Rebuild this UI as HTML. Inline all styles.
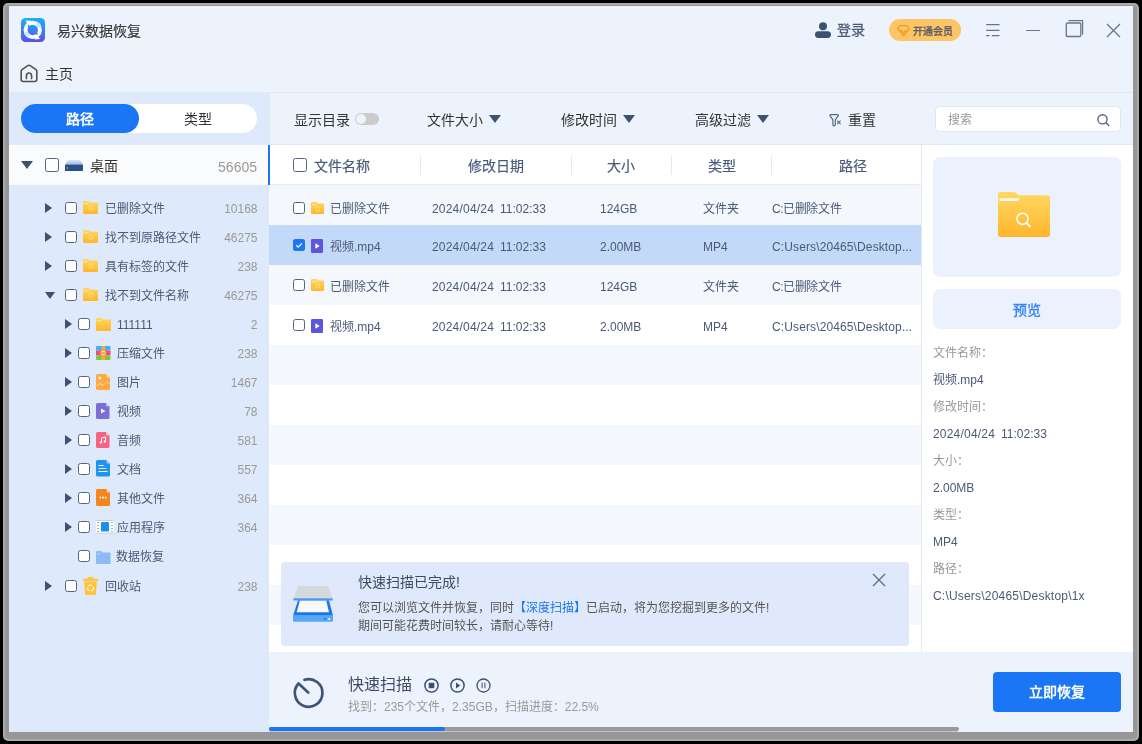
<!DOCTYPE html><html lang="zh-CN"><head><meta charset="utf-8"><style>
*{margin:0;padding:0;box-sizing:border-box}
html,body{width:1142px;height:744px;overflow:hidden;background:#000}
body{position:relative;font-family:"Liberation Sans",sans-serif;color:#333}
.a{position:absolute}
.t{position:absolute;white-space:nowrap;line-height:1;will-change:transform}
svg{position:absolute;overflow:visible}
</style></head><body>
<div class="a" style="left:3px;top:3px;width:1136px;height:738px;background:#aaaaaa;border-radius:5px"></div>
<div class="a" style="left:5px;top:5px;width:1132px;height:734px;background:#979797;border-radius:4px"></div>
<div class="a" style="left:9px;top:6px;width:1124px;height:726px;background:#edf3fd"></div>
<svg style="left:21px;top:18px" width="24" height="24" viewBox="0 0 24 24" ><defs><linearGradient id="lg" x1="0" y1="0" x2="0" y2="1"><stop offset="0" stop-color="#18b2f6"/><stop offset="0.55" stop-color="#3f7cec"/><stop offset="1" stop-color="#5b4ee6"/></linearGradient></defs>
<rect width="24" height="24" rx="4.5" fill="url(#lg)"/>
<circle cx="11.7" cy="11.9" r="7.2" fill="none" stroke="#fff" stroke-width="3.9"/>
<path d="M15.5 5.2A7.2 7.2 0 0 1 18.6 9.5" fill="none" stroke="#d0e4fb" stroke-width="3.9"/>
<path d="M8 18.1A7.2 7.2 0 0 1 4.8 14.2" fill="none" stroke="#d0e4fb" stroke-width="3.9"/>
<path d="M4.3 2.8L10 2.4L7.5 7Z" fill="#fff"/><path d="M19.1 21L13.4 21.4L15.9 16.8Z" fill="#fff"/><path d="M6.6 6.2L9.8 8.6L7.2 9.6Z" fill="#2f90f0"/><path d="M16.8 17.6L13.6 15.2L16.2 14.2Z" fill="#4a72ea"/></svg>
<div class="t" style="left:57.2px;top:24px;font-size:14px;color:#3a3a3a;-webkit-text-stroke:.2px #3a3a3a">易兴数据恢复</div>
<svg style="left:815px;top:22px" width="16" height="16" viewBox="0 0 16 16" ><circle cx="8" cy="4.2" r="4" fill="#3d5170"/><rect x="0" y="9.2" width="16" height="6.8" rx="3.4" fill="#3d5170"/></svg>
<div class="t" style="left:837px;top:23.2px;font-size:14px;color:#4d5a73;-webkit-text-stroke:.3px #4d5a73">登录</div>
<div class="a" style="left:889px;top:19px;width:72px;height:22px;border-radius:11px;background:#ffc465"></div>
<svg style="left:897px;top:25px" width="13" height="12" viewBox="0 0 13 12" ><path d="M3.2 0.7H9.8L12.4 3.6L6.5 10.6L0.6 3.6Z" fill="none" stroke="#f0961a" stroke-width="1.2" stroke-linejoin="round"/><path d="M3.7 5L6.5 7.8L9.3 5" fill="none" stroke="#f0961a" stroke-width="1.1"/></svg>
<div class="t" style="left:913px;top:27px;font-size:10px;color:#555a66;-webkit-text-stroke:.35px #555a66">开通会员</div>
<svg style="left:985px;top:22px" width="16" height="16" viewBox="0 0 16 16" ><path d="M1.2 2.7H14.5M1.2 8.3H14.5M1.2 13.6H4.6M6.8 13.6H14.5" fill="none" stroke="#66758e" stroke-width="1.3"/></svg>
<div class="a" style="left:1026px;top:30px;width:14px;height:1.3px;background:#66758e"></div>
<svg style="left:1065px;top:19px" width="20" height="19" viewBox="0 0 20 19" ><rect x="1.3" y="4" width="14.5" height="13.5" rx="1" fill="none" stroke="#66758e" stroke-width="1.3"/><path d="M3.5 1.6H17.6V15.5" fill="none" stroke="#66758e" stroke-width="1.2"/></svg>
<svg style="left:1106px;top:23px" width="15" height="15" viewBox="0 0 15 15" ><path d="M1 1L14 14M14 1L1 14" fill="none" stroke="#66758e" stroke-width="1.25"/></svg>
<svg style="left:20px;top:64px" width="18" height="19" viewBox="0 0 18 19" ><path d="M1.2 7.3Q1.2 6.3 2 5.7L7.8 1.6Q9 0.8 10.2 1.6L16 5.7Q16.8 6.3 16.8 7.3V15.5Q16.8 17.5 14.8 17.5H3.2Q1.2 17.5 1.2 15.5Z" fill="none" stroke="#505050" stroke-width="1.6" stroke-linejoin="round"/><path d="M6.4 14.6V11.8Q6.4 9 9 9Q11.6 9 11.6 11.8V14.6" fill="none" stroke="#505050" stroke-width="1.6" stroke-linecap="round"/></svg>
<div class="t" style="left:44.5px;top:67px;font-size:14px;color:#333;">主页</div>
<div class="a" style="left:9px;top:92px;width:260px;height:640px;background:#deeafb"></div>
<div class="a" style="left:21px;top:104px;width:236px;height:29px;border-radius:15px;background:#fff"></div>
<div class="a" style="left:21px;top:104px;width:118px;height:29px;border-radius:15px;background:#1b76f5"></div>
<div class="t" style="left:66px;top:112px;font-size:14px;color:#fff;font-weight:bold">路径</div>
<div class="t" style="left:184px;top:112px;font-size:14px;color:#333;">类型</div>
<div class="a" style="left:9px;top:145px;width:259px;height:40px;background:#fafbfd"></div>
<div class="a" style="left:268px;top:145px;width:2px;height:40px;background:#1b76f5;z-index:3"></div>
<svg style="left:21px;top:161.0px" width="12" height="8" viewBox="0 0 12 8" ><path d="M0 0H12L6.0 8Z" fill="#3d5170"/></svg>
<div class="a" style="left:45px;top:158.0px;width:14px;height:14px;border:1.5px solid #56657f;border-radius:2.5px;background:#fff"></div>
<svg style="left:65px;top:160px" width="18" height="11" viewBox="0 0 18 11" ><defs><linearGradient id="dg" x1="0" y1="0" x2="0" y2="1"><stop offset="0" stop-color="#d6e6fa"/><stop offset="1" stop-color="#9dbbe6"/></linearGradient></defs>
<path d="M3 0H15L18 4.5H0Z" fill="url(#dg)"/><rect x="0" y="4.5" width="18" height="6.5" rx="0.8" fill="#2a4f8c"/><rect x="1.8" y="7" width="1" height="2" fill="#5fd35f"/></svg>
<div class="t" style="left:89.5px;top:159px;font-size:14px;color:#333;">桌面</div>
<div class="t" style="left:0px;top:159.5px;font-size:14px;color:#999;width:257px;text-align:right">56605</div>
<svg style="left:45px;top:203px" width="7" height="10" viewBox="0 0 7 10" ><path d="M0 0L7 5L0 10Z" fill="#3d5170"/></svg>
<div class="a" style="left:65px;top:202.0px;width:12px;height:12px;border:1.5px solid #56657f;border-radius:2.5px;background:#fff"></div>
<svg style="left:83px;top:201px" width="15" height="13" viewBox="0 0 15 13" ><defs><linearGradient id="fg83_201" x1="0" y1="0" x2="0" y2="1"><stop offset="0" stop-color="#ffd760"/><stop offset="1" stop-color="#ffb62a"/></linearGradient></defs>
<path d="M1 0H5.5L7 1.5H14Q15 1.5 15 2.5V12Q15 13 14 13H1Q0 13 0 12V1Q0 0 1 0Z" fill="url(#fg83_201)"/>
<rect x="1" y="2.3" width="4.5" height="0.9" fill="#fff3c8" opacity="0.8"/><rect x="6.0" y="5" width="3.5" height="4" rx="1" fill="none" stroke="#ffe9a0" stroke-width="0.8" opacity="0.8"/></svg>
<div class="t" style="left:104.5px;top:203px;font-size:12px;color:#4b5976;">已删除文件</div>
<div class="t" style="left:0px;top:203px;font-size:12px;color:#999;width:257.5px;text-align:right">10168</div>
<svg style="left:45px;top:232px" width="7" height="10" viewBox="0 0 7 10" ><path d="M0 0L7 5L0 10Z" fill="#3d5170"/></svg>
<div class="a" style="left:65px;top:231.0px;width:12px;height:12px;border:1.5px solid #56657f;border-radius:2.5px;background:#fff"></div>
<svg style="left:83px;top:230px" width="15" height="13" viewBox="0 0 15 13" ><defs><linearGradient id="fg83_230" x1="0" y1="0" x2="0" y2="1"><stop offset="0" stop-color="#ffd760"/><stop offset="1" stop-color="#ffb62a"/></linearGradient></defs>
<path d="M1 0H5.5L7 1.5H14Q15 1.5 15 2.5V12Q15 13 14 13H1Q0 13 0 12V1Q0 0 1 0Z" fill="url(#fg83_230)"/>
<rect x="1" y="2.3" width="4.5" height="0.9" fill="#fff3c8" opacity="0.8"/><rect x="6.0" y="5" width="3.5" height="4" rx="1" fill="none" stroke="#ffe9a0" stroke-width="0.8" opacity="0.8"/></svg>
<div class="t" style="left:104.5px;top:232px;font-size:12px;color:#4b5976;">找不到原路径文件</div>
<div class="t" style="left:0px;top:232px;font-size:12px;color:#999;width:257.5px;text-align:right">46275</div>
<svg style="left:45px;top:261px" width="7" height="10" viewBox="0 0 7 10" ><path d="M0 0L7 5L0 10Z" fill="#3d5170"/></svg>
<div class="a" style="left:65px;top:260.0px;width:12px;height:12px;border:1.5px solid #56657f;border-radius:2.5px;background:#fff"></div>
<svg style="left:83px;top:259px" width="15" height="13" viewBox="0 0 15 13" ><defs><linearGradient id="fg83_259" x1="0" y1="0" x2="0" y2="1"><stop offset="0" stop-color="#ffd760"/><stop offset="1" stop-color="#ffb62a"/></linearGradient></defs>
<path d="M1 0H5.5L7 1.5H14Q15 1.5 15 2.5V12Q15 13 14 13H1Q0 13 0 12V1Q0 0 1 0Z" fill="url(#fg83_259)"/>
<rect x="1" y="2.3" width="4.5" height="0.9" fill="#fff3c8" opacity="0.8"/><rect x="6.0" y="5" width="3.5" height="4" rx="1" fill="none" stroke="#ffe9a0" stroke-width="0.8" opacity="0.8"/></svg>
<div class="t" style="left:104.5px;top:261px;font-size:12px;color:#4b5976;">具有标签的文件</div>
<div class="t" style="left:0px;top:261px;font-size:12px;color:#999;width:257.5px;text-align:right">238</div>
<svg style="left:45px;top:291.5px" width="10" height="7" viewBox="0 0 10 7" ><path d="M0 0H10L5.0 7Z" fill="#3d5170"/></svg>
<div class="a" style="left:65px;top:289.0px;width:12px;height:12px;border:1.5px solid #56657f;border-radius:2.5px;background:#fff"></div>
<svg style="left:83px;top:288px" width="15" height="13" viewBox="0 0 15 13" ><defs><linearGradient id="fg83_288" x1="0" y1="0" x2="0" y2="1"><stop offset="0" stop-color="#ffd760"/><stop offset="1" stop-color="#ffb62a"/></linearGradient></defs>
<path d="M1 0H5.5L7 1.5H14Q15 1.5 15 2.5V12Q15 13 14 13H1Q0 13 0 12V1Q0 0 1 0Z" fill="url(#fg83_288)"/>
<rect x="1" y="2.3" width="4.5" height="0.9" fill="#fff3c8" opacity="0.8"/><rect x="6.0" y="5" width="3.5" height="4" rx="1" fill="none" stroke="#ffe9a0" stroke-width="0.8" opacity="0.8"/></svg>
<div class="t" style="left:104.5px;top:290px;font-size:12px;color:#4b5976;">找不到文件名称</div>
<div class="t" style="left:0px;top:290px;font-size:12px;color:#999;width:257.5px;text-align:right">46275</div>
<svg style="left:65px;top:319px" width="7" height="10" viewBox="0 0 7 10" ><path d="M0 0L7 5L0 10Z" fill="#3d5170"/></svg>
<div class="a" style="left:78px;top:318.0px;width:12px;height:12px;border:1.5px solid #56657f;border-radius:2.5px;background:#fff"></div>
<svg style="left:96px;top:318px" width="15" height="13" viewBox="0 0 15 13" ><defs><linearGradient id="fg96_318" x1="0" y1="0" x2="0" y2="1"><stop offset="0" stop-color="#ffd760"/><stop offset="1" stop-color="#ffb62a"/></linearGradient></defs>
<path d="M1 0H5.5L7 1.5H14Q15 1.5 15 2.5V12Q15 13 14 13H1Q0 13 0 12V1Q0 0 1 0Z" fill="url(#fg96_318)"/>
<rect x="1" y="2.3" width="4.5" height="0.9" fill="#fff3c8" opacity="0.8"/></svg>
<div class="t" style="left:117.0px;top:319px;font-size:12px;color:#4b5976;">111111</div>
<div class="t" style="left:0px;top:319px;font-size:12px;color:#999;width:257.5px;text-align:right">2</div>
<svg style="left:65px;top:348px" width="7" height="10" viewBox="0 0 7 10" ><path d="M0 0L7 5L0 10Z" fill="#3d5170"/></svg>
<div class="a" style="left:78px;top:347.0px;width:12px;height:12px;border:1.5px solid #56657f;border-radius:2.5px;background:#fff"></div>
<svg style="left:96px;top:346px" width="14.5" height="14" viewBox="0 0 14.5 14" ><rect x="0" y="0" width="14.5" height="4.5" rx="1" fill="#3cb6f0"/><rect x="0" y="4.5" width="14.5" height="5" fill="#f0506a"/><rect x="0" y="9.5" width="14.5" height="4.5" rx="1" fill="#7cc742"/><rect x="5.5" y="0" width="3.5" height="14" fill="#ffa733"/><rect x="4.8" y="5.5" width="4.9" height="3" rx="1.2" fill="none" stroke="#ffe1b0" stroke-width="0.9"/></svg>
<div class="t" style="left:117.0px;top:348px;font-size:12px;color:#4b5976;">压缩文件</div>
<div class="t" style="left:0px;top:348px;font-size:12px;color:#999;width:257.5px;text-align:right">238</div>
<svg style="left:65px;top:377px" width="7" height="10" viewBox="0 0 7 10" ><path d="M0 0L7 5L0 10Z" fill="#3d5170"/></svg>
<div class="a" style="left:78px;top:376.0px;width:12px;height:12px;border:1.5px solid #56657f;border-radius:2.5px;background:#fff"></div>
<svg style="left:96px;top:374px" width="14" height="16" viewBox="0 0 14 16" ><path d="M1.5 0H10.5L14 3.5V14.5Q14 16 12.5 16H1.5Q0 16 0 14.5V1.5Q0 0 1.5 0Z" fill="#ffa940"/><path d="M10.5 0V2.5Q10.5 3.5 11.5 3.5H14Z" fill="#fff" opacity="0.55"/><circle cx="3.7" cy="4" r="1.6" fill="#fff" opacity="0.85"/><path d="M0.8 12L4 9.5L7 11.5L11 7.5L13.5 10" fill="none" stroke="#ffe2b8" stroke-width="0.9"/></svg>
<div class="t" style="left:117.0px;top:377px;font-size:12px;color:#4b5976;">图片</div>
<div class="t" style="left:0px;top:377px;font-size:12px;color:#999;width:257.5px;text-align:right">1467</div>
<svg style="left:65px;top:406px" width="7" height="10" viewBox="0 0 7 10" ><path d="M0 0L7 5L0 10Z" fill="#3d5170"/></svg>
<div class="a" style="left:78px;top:405.0px;width:12px;height:12px;border:1.5px solid #56657f;border-radius:2.5px;background:#fff"></div>
<svg style="left:96px;top:403px" width="13.5" height="16" viewBox="0 0 13.5 16" ><path d="M1.5 0H10.0L13.5 3.5V14.5Q13.5 16 12.0 16H1.5Q0 16 0 14.5V1.5Q0 0 1.5 0Z" fill="#7b6fd6"/><path d="M10.0 0V2.5Q10.0 3.5 11.0 3.5H13.5Z" fill="#fff" opacity="0.55"/><path d="M5 5.5L9.5 8L5 10.5Z" fill="#fff" opacity="0.9"/></svg>
<div class="t" style="left:117.0px;top:406px;font-size:12px;color:#4b5976;">视频</div>
<div class="t" style="left:0px;top:406px;font-size:12px;color:#999;width:257.5px;text-align:right">78</div>
<svg style="left:65px;top:435px" width="7" height="10" viewBox="0 0 7 10" ><path d="M0 0L7 5L0 10Z" fill="#3d5170"/></svg>
<div class="a" style="left:78px;top:434.0px;width:12px;height:12px;border:1.5px solid #56657f;border-radius:2.5px;background:#fff"></div>
<svg style="left:96px;top:432px" width="13.5" height="16" viewBox="0 0 13.5 16" ><path d="M1.5 0H10.0L13.5 3.5V14.5Q13.5 16 12.0 16H1.5Q0 16 0 14.5V1.5Q0 0 1.5 0Z" fill="#f56580"/><path d="M10.0 0V2.5Q10.0 3.5 11.0 3.5H13.5Z" fill="#fff" opacity="0.55"/><path d="M5.5 10.5V6L9.5 5V9.5" fill="none" stroke="#fff" stroke-width="1"/><circle cx="4.7" cy="10.6" r="1.1" fill="#fff"/><circle cx="8.7" cy="9.7" r="1.1" fill="#fff"/></svg>
<div class="t" style="left:117.0px;top:435px;font-size:12px;color:#4b5976;">音频</div>
<div class="t" style="left:0px;top:435px;font-size:12px;color:#999;width:257.5px;text-align:right">581</div>
<svg style="left:65px;top:464px" width="7" height="10" viewBox="0 0 7 10" ><path d="M0 0L7 5L0 10Z" fill="#3d5170"/></svg>
<div class="a" style="left:78px;top:463.0px;width:12px;height:12px;border:1.5px solid #56657f;border-radius:2.5px;background:#fff"></div>
<svg style="left:96px;top:460px" width="14" height="16.5" viewBox="0 0 14 16.5" ><path d="M1.5 0H10.5L14 3.5V15.0Q14 16.5 12.5 16.5H1.5Q0 16.5 0 15.0V1.5Q0 0 1.5 0Z" fill="#1e96ee"/><path d="M10.5 0V2.5Q10.5 3.5 11.5 3.5H14Z" fill="#fff" opacity="0.55"/><rect x="2.5" y="5" width="5" height="1" fill="#fff"/><rect x="2.5" y="8" width="8" height="1" fill="#fff" opacity=".8"/><rect x="2.5" y="11" width="9" height="1" fill="#fff"/></svg>
<div class="t" style="left:117.0px;top:464px;font-size:12px;color:#4b5976;">文档</div>
<div class="t" style="left:0px;top:464px;font-size:12px;color:#999;width:257.5px;text-align:right">557</div>
<svg style="left:65px;top:493px" width="7" height="10" viewBox="0 0 7 10" ><path d="M0 0L7 5L0 10Z" fill="#3d5170"/></svg>
<div class="a" style="left:78px;top:492.0px;width:12px;height:12px;border:1.5px solid #56657f;border-radius:2.5px;background:#fff"></div>
<svg style="left:96px;top:489px" width="14" height="17" viewBox="0 0 14 17" ><path d="M1.5 0H10.5L14 3.5V15.5Q14 17 12.5 17H1.5Q0 17 0 15.5V1.5Q0 0 1.5 0Z" fill="#f5861e"/><path d="M10.5 0V2.5Q10.5 3.5 11.5 3.5H14Z" fill="#fff" opacity="0.55"/><circle cx="4.3" cy="8.5" r="0.9" fill="#fff"/><circle cx="7" cy="8.5" r="0.9" fill="#fff"/><circle cx="9.7" cy="8.5" r="0.9" fill="#fff"/></svg>
<div class="t" style="left:117.0px;top:493px;font-size:12px;color:#4b5976;">其他文件</div>
<div class="t" style="left:0px;top:493px;font-size:12px;color:#999;width:257.5px;text-align:right">364</div>
<svg style="left:65px;top:522px" width="7" height="10" viewBox="0 0 7 10" ><path d="M0 0L7 5L0 10Z" fill="#3d5170"/></svg>
<div class="a" style="left:78px;top:521.0px;width:12px;height:12px;border:1.5px solid #56657f;border-radius:2.5px;background:#fff"></div>
<svg style="left:96px;top:520px" width="18" height="13.5" viewBox="0 0 18 13.5" ><rect x="0" y="0" width="18" height="13.5" fill="#fff"/><rect x="0" y="0" width="18" height="0.7" fill="#bbb"/><rect x="0" y="12.8" width="18" height="0.7" fill="#bbb"/><rect x="5" y="2" width="8" height="9.5" rx="0.8" fill="#1890f0"/><rect x="1" y="2" width="2" height="0.8" fill="#999"/><rect x="15" y="2" width="2" height="0.8" fill="#999"/><rect x="1" y="5" width="2" height="0.8" fill="#999"/><rect x="15" y="5" width="2" height="0.8" fill="#999"/><rect x="1" y="8" width="2" height="0.8" fill="#999"/><rect x="15" y="8" width="2" height="0.8" fill="#999"/><rect x="1" y="11" width="2" height="0.8" fill="#999"/><rect x="15" y="11" width="2" height="0.8" fill="#999"/></svg>
<div class="t" style="left:117.0px;top:522px;font-size:12px;color:#4b5976;">应用程序</div>
<div class="t" style="left:0px;top:522px;font-size:12px;color:#999;width:257.5px;text-align:right">364</div>
<div class="a" style="left:78px;top:550.0px;width:12px;height:12px;border:1.5px solid #56657f;border-radius:2.5px;background:#fff"></div>
<svg style="left:96px;top:551px" width="14.5" height="13" viewBox="0 0 14.5 13" ><path d="M1 0H5L6.5 1.5H13.5Q14.5 1.5 14.5 2.5V12Q14.5 13 13.5 13H1Q0 13 0 12V1Q0 0 1 0Z" fill="#8db9f5"/><rect x="0.8" y="2.5" width="4" height="0.8" fill="#c9defb"/></svg>
<div class="t" style="left:116.0px;top:551px;font-size:12px;color:#4b5976;">数据恢复</div>
<svg style="left:45px;top:581px" width="7" height="10" viewBox="0 0 7 10" ><path d="M0 0L7 5L0 10Z" fill="#3d5170"/></svg>
<div class="a" style="left:65px;top:580.0px;width:12px;height:12px;border:1.5px solid #56657f;border-radius:2.5px;background:#fff"></div>
<svg style="left:83px;top:577px" width="15" height="18" viewBox="0 0 15 18" ><rect x="4.5" y="0" width="6" height="2" rx="1" fill="#ffc43a"/><rect x="0" y="1.8" width="15" height="2.6" rx="1" fill="#ffc43a"/><path d="M1.2 5H13.8L13 16.5Q12.9 18 11.4 18H3.6Q2.1 18 2 16.5Z" fill="#ffc43a"/><circle cx="7.5" cy="11" r="3" fill="none" stroke="#fff" stroke-width="1.1" stroke-dasharray="4 1.6"/></svg>
<div class="t" style="left:104.5px;top:581px;font-size:12px;color:#4b5976;">回收站</div>
<div class="t" style="left:0px;top:581px;font-size:12px;color:#999;width:257.5px;text-align:right">238</div>
<div class="a" style="left:269px;top:92px;width:864px;height:53px;border-top:1px solid #e3e7ed;border-left:1px solid #e3e7ed;border-bottom:1px solid #e3e7ed;background:#edf3fd"></div>
<div class="t" style="left:293.5px;top:113px;font-size:14px;color:#333;">显示目录</div>
<div class="a" style="left:355px;top:113px;width:24px;height:12px;border-radius:6px;background:#cbcbcb"></div>
<div class="a" style="left:356px;top:114px;width:10px;height:10px;border-radius:5px;background:#eef3fb"></div>
<div class="t" style="left:427px;top:113px;font-size:14px;color:#333;">文件大小</div>
<svg style="left:489px;top:115px" width="12" height="8" viewBox="0 0 12 8" ><path d="M0 0H12L6 8Z" fill="#3d5170"/></svg>
<div class="t" style="left:561px;top:113px;font-size:14px;color:#333;">修改时间</div>
<svg style="left:623px;top:115px" width="12" height="8" viewBox="0 0 12 8" ><path d="M0 0H12L6 8Z" fill="#3d5170"/></svg>
<div class="t" style="left:695px;top:113px;font-size:14px;color:#333;">高级过滤</div>
<svg style="left:757px;top:115px" width="12" height="8" viewBox="0 0 12 8" ><path d="M0 0H12L6 8Z" fill="#3d5170"/></svg>
<svg style="left:829px;top:114px" width="13" height="13" viewBox="0 0 13 13" ><path d="M0.9 1.6Q0.6 0.6 1.6 0.6H8.6Q9.6 0.6 9.3 1.6L6.3 5.8V10.6Q6.3 11.9 5.1 11.9Q3.9 11.9 3.9 10.6V5.8Z" fill="none" stroke="#5c6b86" stroke-width="1.2" stroke-linejoin="round"/><path d="M8.2 6.6L11.6 10M11.6 6.6L8.2 10" stroke="#5c6b86" stroke-width="1.1"/></svg>
<div class="t" style="left:847.5px;top:113px;font-size:14px;color:#333;">重置</div>
<div class="a" style="left:935px;top:106px;width:186px;height:26px;background:#fff;border:1px solid #e3e8ef;border-radius:4px"></div>
<div class="t" style="left:948px;top:114px;font-size:12px;color:#999;">搜索</div>
<svg style="left:1097px;top:114px" width="13" height="12" viewBox="0 0 13 12" ><circle cx="5.5" cy="5.3" r="4.6" fill="none" stroke="#56657f" stroke-width="1.4"/><path d="M9 8.8L11.8 11.5" stroke="#56657f" stroke-width="1.5" stroke-linecap="round"/></svg>
<div class="a" style="left:269px;top:145px;width:652px;height:507px;background:#fff"></div>
<div class="a" style="left:269px;top:184px;width:652px;height:1px;background:#e8ebf0"></div>
<div class="a" style="left:293px;top:158.0px;width:14px;height:14px;border:1.5px solid #56657f;border-radius:2.5px;background:#fff"></div>
<div class="t" style="left:314px;top:159px;font-size:14px;color:#4a5a78;-webkit-text-stroke:.2px #4a5a78">文件名称</div>
<div class="a" style="left:420px;top:156px;width:1px;height:19px;background:#e6e9ee"></div>
<div class="a" style="left:571px;top:156px;width:1px;height:19px;background:#e6e9ee"></div>
<div class="a" style="left:671px;top:156px;width:1px;height:19px;background:#e6e9ee"></div>
<div class="a" style="left:771px;top:156px;width:1px;height:19px;background:#e6e9ee"></div>
<div class="t" style="left:468px;top:159px;font-size:14px;color:#4a5a78;-webkit-text-stroke:.2px #4a5a78">修改日期</div>
<div class="t" style="left:607px;top:159px;font-size:14px;color:#4a5a78;-webkit-text-stroke:.2px #4a5a78">大小</div>
<div class="t" style="left:707.5px;top:159px;font-size:14px;color:#4a5a78;-webkit-text-stroke:.2px #4a5a78">类型</div>
<div class="t" style="left:839px;top:159px;font-size:14px;color:#4a5a78;-webkit-text-stroke:.2px #4a5a78">路径</div>
<div class="a" style="left:269px;top:185px;width:652px;height:40px;background:#f4f7fc"></div>
<div class="a" style="left:269px;top:225px;width:652px;height:40px;background:#c2d9fa"></div>
<div class="a" style="left:269px;top:265px;width:652px;height:40px;background:#f4f7fc"></div>
<div class="a" style="left:269px;top:305px;width:652px;height:40px;background:#ffffff"></div>
<div class="a" style="left:269px;top:345px;width:652px;height:40px;background:#f4f7fc"></div>
<div class="a" style="left:269px;top:385px;width:652px;height:40px;background:#ffffff"></div>
<div class="a" style="left:269px;top:425px;width:652px;height:40px;background:#f4f7fc"></div>
<div class="a" style="left:269px;top:465px;width:652px;height:40px;background:#ffffff"></div>
<div class="a" style="left:269px;top:505px;width:652px;height:40px;background:#f4f7fc"></div>
<div class="a" style="left:269px;top:545px;width:652px;height:40px;background:#ffffff"></div>
<div class="a" style="left:269px;top:585px;width:652px;height:40px;background:#f4f7fc"></div>
<div class="a" style="left:269px;top:625px;width:652px;height:27px;background:#ffffff"></div>
<div class="a" style="left:293px;top:202.0px;width:12px;height:12px;border:1.5px solid #56657f;border-radius:2.5px;background:#fff"></div>
<svg style="left:311px;top:202px" width="13" height="12" viewBox="0 0 13 12" ><defs><linearGradient id="fg311_202" x1="0" y1="0" x2="0" y2="1"><stop offset="0" stop-color="#ffd760"/><stop offset="1" stop-color="#ffb62a"/></linearGradient></defs>
<path d="M1 0H5.5L7 1.5H12Q13 1.5 13 2.5V11Q13 12 12 12H1Q0 12 0 11V1Q0 0 1 0Z" fill="url(#fg311_202)"/>
<rect x="1" y="2.3" width="4.5" height="0.9" fill="#fff3c8" opacity="0.8"/><rect x="5.0" y="5" width="3.5" height="4" rx="1" fill="none" stroke="#ffe9a0" stroke-width="0.8" opacity="0.8"/></svg>
<div class="t" style="left:330px;top:203px;font-size:12px;color:#4b5976;">已删除文件</div>
<div class="t" style="left:432px;top:203px;font-size:12px;color:#4b5976;letter-spacing:.2px">2024/04/24</div>
<div class="t" style="left:499.6px;top:203px;font-size:12px;color:#4b5976;">11:02:33</div>
<div class="t" style="left:600.2px;top:203px;font-size:12px;color:#4b5976;">124GB</div>
<div class="t" style="left:703px;top:203px;font-size:12px;color:#4b5976;">文件夹</div>
<div class="t" style="left:771.5px;top:203px;font-size:12px;color:#4b5976;letter-spacing:-.4px">C:已删除文件</div>
<div class="a" style="left:293px;top:239px;width:12px;height:12px;background:#1b76f5;border-radius:2.5px"></div>
<svg style="left:293px;top:239px" width="12" height="12" viewBox="0 0 12 12" ><path d="M3.2 6.2L5.2 8.1L8.9 4.3" fill="none" stroke="#fff" stroke-width="1.2"/></svg>
<svg style="left:311px;top:239px" width="12" height="14" viewBox="0 0 12 14" ><rect width="12" height="14" rx="1.2" fill="#5b55e0"/><path d="M4.3 4.3L8.7 7L4.3 9.7Z" fill="#fff"/></svg>
<div class="t" style="left:330px;top:241px;font-size:12px;color:#4b5976;">视频.mp4</div>
<div class="t" style="left:432px;top:241px;font-size:12px;color:#4b5976;letter-spacing:.2px">2024/04/24</div>
<div class="t" style="left:499.6px;top:241px;font-size:12px;color:#4b5976;">11:02:33</div>
<div class="t" style="left:600.2px;top:241px;font-size:12px;color:#4b5976;">2.00MB</div>
<div class="t" style="left:703px;top:241px;font-size:12px;color:#4b5976;">MP4</div>
<div class="t" style="left:771.5px;top:241px;font-size:12px;color:#4b5976;letter-spacing:.12px">C:Users\20465\Desktop...</div>
<div class="a" style="left:293px;top:279.0px;width:12px;height:12px;border:1.5px solid #56657f;border-radius:2.5px;background:#fff"></div>
<svg style="left:311px;top:279px" width="13" height="12" viewBox="0 0 13 12" ><defs><linearGradient id="fg311_279" x1="0" y1="0" x2="0" y2="1"><stop offset="0" stop-color="#ffd760"/><stop offset="1" stop-color="#ffb62a"/></linearGradient></defs>
<path d="M1 0H5.5L7 1.5H12Q13 1.5 13 2.5V11Q13 12 12 12H1Q0 12 0 11V1Q0 0 1 0Z" fill="url(#fg311_279)"/>
<rect x="1" y="2.3" width="4.5" height="0.9" fill="#fff3c8" opacity="0.8"/><rect x="5.0" y="5" width="3.5" height="4" rx="1" fill="none" stroke="#ffe9a0" stroke-width="0.8" opacity="0.8"/></svg>
<div class="t" style="left:330px;top:281px;font-size:12px;color:#4b5976;">已删除文件</div>
<div class="t" style="left:432px;top:281px;font-size:12px;color:#4b5976;letter-spacing:.2px">2024/04/24</div>
<div class="t" style="left:499.6px;top:281px;font-size:12px;color:#4b5976;">11:02:33</div>
<div class="t" style="left:600.2px;top:281px;font-size:12px;color:#4b5976;">124GB</div>
<div class="t" style="left:703px;top:281px;font-size:12px;color:#4b5976;">文件夹</div>
<div class="t" style="left:771.5px;top:281px;font-size:12px;color:#4b5976;letter-spacing:-.4px">C:已删除文件</div>
<div class="a" style="left:293px;top:319.0px;width:12px;height:12px;border:1.5px solid #56657f;border-radius:2.5px;background:#fff"></div>
<svg style="left:311px;top:319px" width="12" height="14" viewBox="0 0 12 14" ><rect width="12" height="14" rx="1.2" fill="#5b55e0"/><path d="M4.3 4.3L8.7 7L4.3 9.7Z" fill="#fff"/></svg>
<div class="t" style="left:330px;top:321px;font-size:12px;color:#4b5976;">视频.mp4</div>
<div class="t" style="left:432px;top:321px;font-size:12px;color:#4b5976;letter-spacing:.2px">2024/04/24</div>
<div class="t" style="left:499.6px;top:321px;font-size:12px;color:#4b5976;">11:02:33</div>
<div class="t" style="left:600.2px;top:321px;font-size:12px;color:#4b5976;">2.00MB</div>
<div class="t" style="left:703px;top:321px;font-size:12px;color:#4b5976;">MP4</div>
<div class="t" style="left:771.5px;top:321px;font-size:12px;color:#4b5976;letter-spacing:.12px">C:Users\20465\Desktop...</div>
<div class="a" style="left:921px;top:145px;width:212px;height:507px;background:#fff;border-left:1px solid #e6e9ee"></div>
<div class="a" style="left:933px;top:157px;width:188px;height:120px;background:#ebf2fd;border-radius:7px"></div>
<svg style="left:998px;top:192px" width="52" height="45" viewBox="0 0 52 45" ><defs><linearGradient id="bf" x1="0" y1="0" x2="0" y2="1"><stop offset="0" stop-color="#ffd862"/><stop offset="1" stop-color="#ffb52c"/></linearGradient></defs>
<path d="M3 0H15Q17 0 18.5 1.3L21 3.3H49Q52 3.3 52 6.3V42Q52 45 49 45H3Q0 45 0 42V3Q0 0 3 0Z" fill="url(#bf)"/>
<path d="M1.5 6.3H22L19.5 9H1.5Z" fill="#fff" opacity="0.9"/>
<circle cx="24.5" cy="26.8" r="5.6" fill="none" stroke="#fff" stroke-width="1.6"/><path d="M28.5 31L32 34.5" stroke="#fff" stroke-width="1.8" stroke-linecap="round"/></svg>
<div class="a" style="left:933px;top:289px;width:188px;height:40px;background:#ebf2fd;border-radius:7px"></div>
<div class="t" style="left:1013px;top:302.6px;font-size:14px;color:#3483f3;-webkit-text-stroke:.35px #3483f3">预览</div>
<div class="t" style="left:933px;top:347px;font-size:12px;color:#999;">文件名称：</div>
<div class="t" style="left:933px;top:374px;font-size:12px;color:#4b5976;">视频.mp4</div>
<div class="t" style="left:933px;top:401px;font-size:12px;color:#999;">修改时间：</div>
<div class="t" style="left:933px;top:455px;font-size:12px;color:#999;">大小：</div>
<div class="t" style="left:933px;top:482px;font-size:12px;color:#4b5976;">2.00MB</div>
<div class="t" style="left:933px;top:509px;font-size:12px;color:#999;">类型：</div>
<div class="t" style="left:933px;top:536px;font-size:12px;color:#4b5976;">MP4</div>
<div class="t" style="left:933px;top:563px;font-size:12px;color:#999;">路径：</div>
<div class="t" style="left:933px;top:590px;font-size:12px;color:#4b5976;letter-spacing:.2px">C:\Users\20465\Desktop\1x</div>
<div class="t" style="left:933px;top:428px;font-size:12px;color:#4b5976;letter-spacing:.2px">2024/04/24</div>
<div class="t" style="left:1000.8px;top:428px;font-size:12px;color:#4b5976;">11:02:33</div>
<div class="a" style="left:281px;top:562px;width:628px;height:84px;background:#dfe9fb;border-radius:4px"></div>
<svg style="left:292px;top:585px" width="42" height="38" viewBox="0 0 42 38" ><path d="M6.1 1H36L40.7 13.5H1.4Z" fill="#d5d8dd"/><rect x="1.4" y="13.3" width="39.3" height="2.2" fill="#4a9af5"/>
<path d="M6 15.5H37L41 30.8H1Z" fill="#1b76e8"/><path d="M7.8 15.8H34.3L37 27.3H4.7Z" fill="#f7f9fc"/>
<path d="M1 30.3H41V35.2Q41 36.7 39.5 36.7H2.5Q1 36.7 1 35.2Z" fill="#5aa6f6"/><circle cx="33" cy="34" r="1.1" fill="#1b6fe0"/><circle cx="37.3" cy="34" r="1.1" fill="#fff"/></svg>
<div class="t" style="left:357.5px;top:575px;font-size:14px;color:#3d4a63;">快速扫描已完成!</div>
<div class="t" style="left:357.5px;top:602px;font-size:12px;color:#555;">您可以浏览文件并恢复，同时<span style="color:#1b76f5">【深度扫描】</span>已启动，将为您挖掘到更多的文件!</div>
<div class="t" style="left:357.5px;top:619.5px;font-size:12px;color:#555;">期间可能花费时间较长，请耐心等待!</div>
<svg style="left:872px;top:573px" width="14" height="14" viewBox="0 0 14 14" ><path d="M1 1L13 13M13 1L1 13" fill="none" stroke="#5c6b86" stroke-width="1.3"/></svg>
<div class="a" style="left:269px;top:652px;width:864px;height:80px;background:#edf3fd"></div>
<svg style="left:292px;top:676.5px" width="32" height="33" viewBox="0 0 32 33" ><path d="M12.5 2.8A13.8 13.8 0 1 1 6.6 6.5L16.2 15.5" fill="none" stroke="#3d5477" stroke-width="2.7" stroke-linecap="round" stroke-linejoin="round"/></svg>
<div class="t" style="left:348px;top:677px;font-size:16px;color:#3d4a63;">快速扫描</div>
<svg style="left:423.5px;top:677.5px" width="15" height="15" viewBox="0 0 15 15" ><circle cx="7.5" cy="7.5" r="6.6" fill="none" stroke="#3d5170" stroke-width="1.5"/><rect x="4.7" y="4.7" width="5.6" height="5.6" rx="0.8" fill="#3d5170"/></svg>
<svg style="left:449.5px;top:677.5px" width="15" height="15" viewBox="0 0 15 15" ><circle cx="7.5" cy="7.5" r="6.6" fill="none" stroke="#3d5170" stroke-width="1.5"/><path d="M6 4.5L10.3 7.5L6 10.5Z" fill="#3d5170"/></svg>
<svg style="left:475.5px;top:677.5px" width="15" height="15" viewBox="0 0 15 15" ><circle cx="7.5" cy="7.5" r="6.5" fill="none" stroke="#3d5170" stroke-width="1.3"/><rect x="5.6" y="4.6" width="1" height="5.6" fill="#3d5170"/><rect x="8.4" y="4.6" width="1" height="5.6" fill="#3d5170"/></svg>
<div class="t" style="left:348px;top:701px;font-size:12px;color:#999;">找到：235个文件，2.35GB，扫描进度：22.5%</div>
<div class="a" style="left:269px;top:731px;width:689px;height:1px;background:#c3c7cc"></div>
<div class="a" style="left:269px;top:727px;width:690px;height:4px;background:#999;border-radius:2px"></div>
<div class="a" style="left:269px;top:727px;width:175.5px;height:4px;background:#1b76f5;border-radius:2px"></div>
<div class="a" style="left:993px;top:672px;width:128px;height:40px;background:#1b76f5;border-radius:4px"></div>
<div class="t" style="left:1029px;top:685px;font-size:14px;color:#fff;font-weight:bold">立即恢复</div>
</body></html>
